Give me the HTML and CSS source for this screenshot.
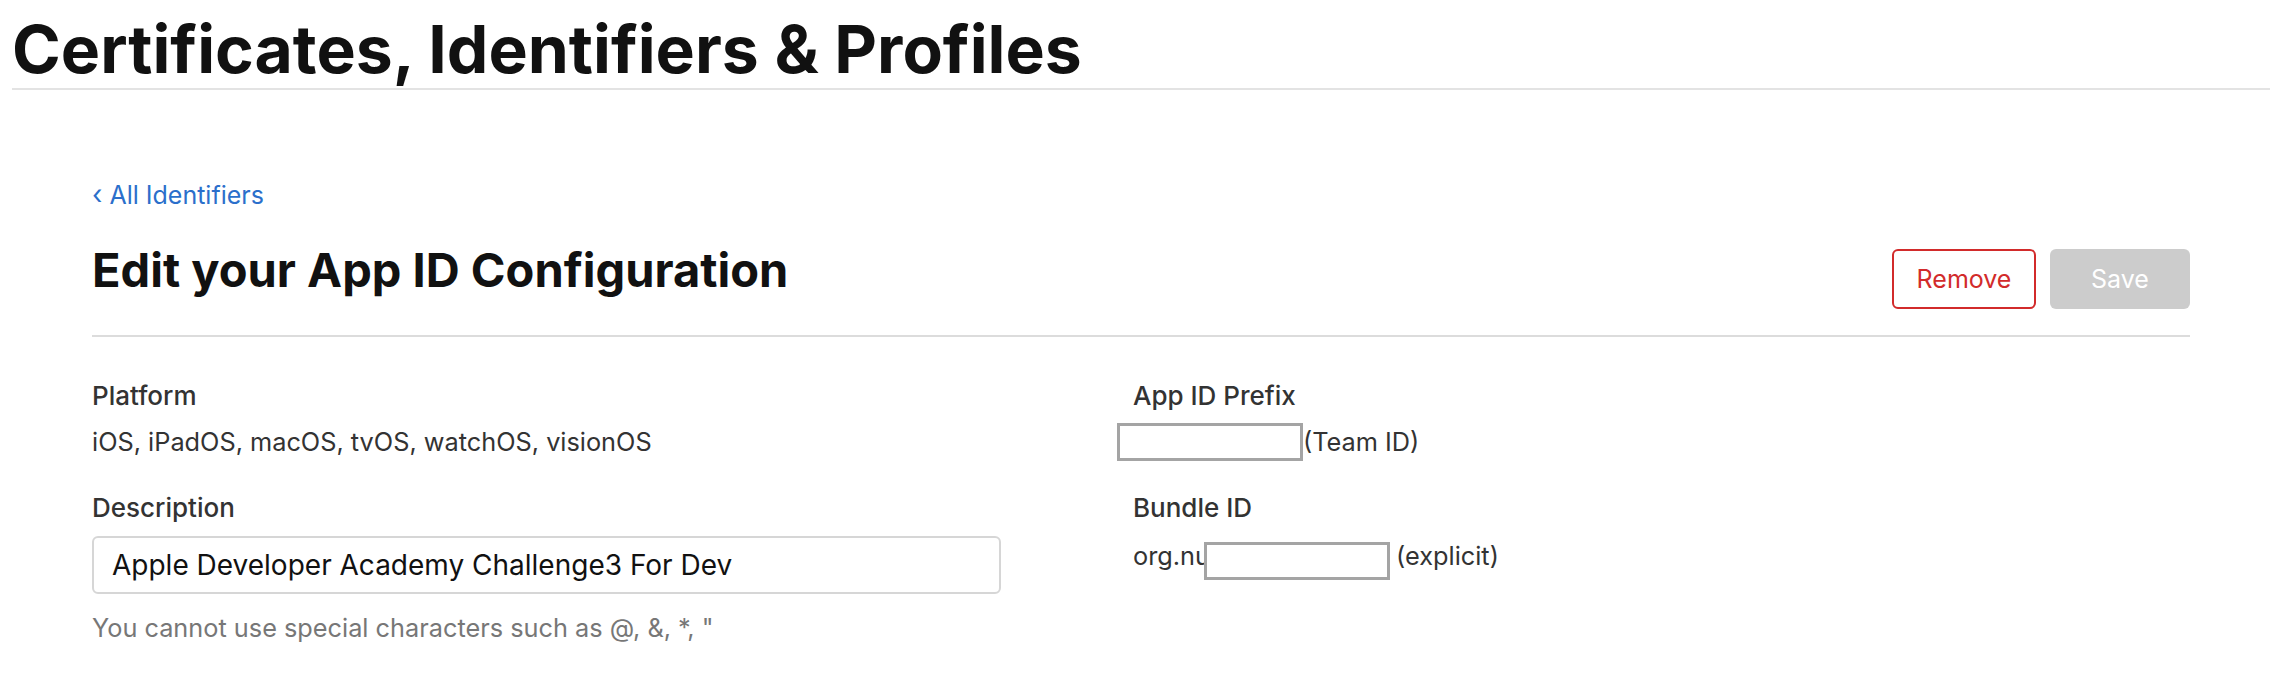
FILE: index.html
```html
<!DOCTYPE html>
<html lang="en">
<head>
<meta charset="utf-8">
<title>Certificates, Identifiers &amp; Profiles</title>
<link rel="stylesheet" href="styles.css">
</head>
<body>
<header class="page-header">
  <h1 class="page-title">Certificates, Identifiers &amp; Profiles</h1>
</header>
<main class="content">
  <a class="back-link" href="#"><span class="chev">‹</span> All Identifiers</a>
  <div class="toolbar">
    <h2 class="section-title">Edit your App ID Configuration</h2>
    <div class="actions">
      <button class="btn btn-remove" type="button">Remove</button>
      <button class="btn btn-save" type="button" disabled>Save</button>
    </div>
  </div>
  <div class="fields">
    <div class="col">
      <div class="field">
        <div class="label">Platform</div>
        <div class="value">iOS, iPadOS, macOS, tvOS, watchOS, visionOS</div>
      </div>
      <div class="field">
        <div class="label">Description</div>
        <input class="text-input" type="text" value="Apple Developer Academy Challenge3 For Dev">
        <div class="hint">You cannot use special characters such as @, &amp;, *, "</div>
      </div>
    </div>
    <div class="col">
      <div class="field">
        <div class="label">App ID Prefix</div>
        <div class="value"><span class="redact-slot prefix-slot"><span class="redact redact-prefix"></span></span>(Team ID)</div>
      </div>
      <div class="field">
        <div class="label">Bundle ID</div>
        <div class="value value-bundle">org.nu<span class="redact-slot bundle-slot"><span class="redact redact-bundle"></span></span> (explicit)</div>
      </div>
    </div>
  </div>
</main>
</body>
</html>
```

FILE: styles.css
```css
* { box-sizing: border-box; }
html, body { margin: 0; padding: 0; background: #fff; }
body {
  font-family: Inter, "Noto Sans", "Liberation Sans", sans-serif;
  color: #333;
}
.page-header {
  margin: 0 12px;
  padding-top: 13px;
  padding-bottom: 3px;
  border-bottom: 2px solid #e3e3e3;
}
.page-title {
  margin: 0;
  font-size: 66px;
  line-height: 72px;
  font-weight: 700;
  color: #111;
}
.content {
  padding: 0 92px;
}
.back-link {
  display: inline-block;
  margin-top: 90px;
  font-size: 25px;
  line-height: 30px;
  color: #2b6fcb;
  text-decoration: none;
}
.chev { font-size: 27px; }
.toolbar {
  display: flex;
  justify-content: space-between;
  align-items: flex-start;
  border-bottom: 2px solid #dcdcdc;
  padding: 32px 0 26px;
}
.section-title {
  margin: 0;
  font-size: 47px;
  line-height: 56px;
  font-weight: 700;
  color: #111;
}
.actions {
  display: flex;
  gap: 14px;
  margin-top: 7px;
}
.btn {
  font-family: inherit;
  font-size: 25px;
  height: 60px;
  border-radius: 6px;
  padding: 0;
}
.btn-remove {
  width: 144px;
  background: #fff;
  color: #d22b2b;
  border: 2px solid #d22b2b;
}
.btn-save {
  width: 140px;
  background: #cccccc;
  color: #fff;
  border: none;
}
.fields {
  display: grid;
  grid-template-columns: 1041px 1fr;
  padding-top: 41px;
}
.field { margin-bottom: 30px; }
.label {
  font-size: 26px;
  line-height: 36px;
  font-weight: 500;
  color: #333;
}
.value {
  font-size: 25.3px;
  line-height: 36px;
  margin-top: 10px;
  color: #333;
}
.value-bundle { margin-top: 12px; }
.text-input {
  display: block;
  margin-top: 10px;
  width: 909px;
  height: 58px;
  border: 2px solid #d6d6d6;
  border-radius: 6px;
  padding: 0 18px;
  font-family: inherit;
  font-size: 28px;
  color: #111;
}
.hint {
  margin-top: 18px;
  font-size: 25.3px;
  line-height: 32px;
  color: #777;
}
.redact-slot {
  position: relative;
  display: inline-block;
  height: 1em;
  vertical-align: baseline;
}
.prefix-slot { width: 170px; }
.bundle-slot { width: 179px; }
.redact {
  position: absolute;
  background: #fff;
  border: 3px solid #a4a4a4;
  height: 38px;
}
.redact-prefix { left: -16px; right: 0; top: -3px; }
.redact-bundle { left: -6px; right: -1px; top: 2px; }
```
